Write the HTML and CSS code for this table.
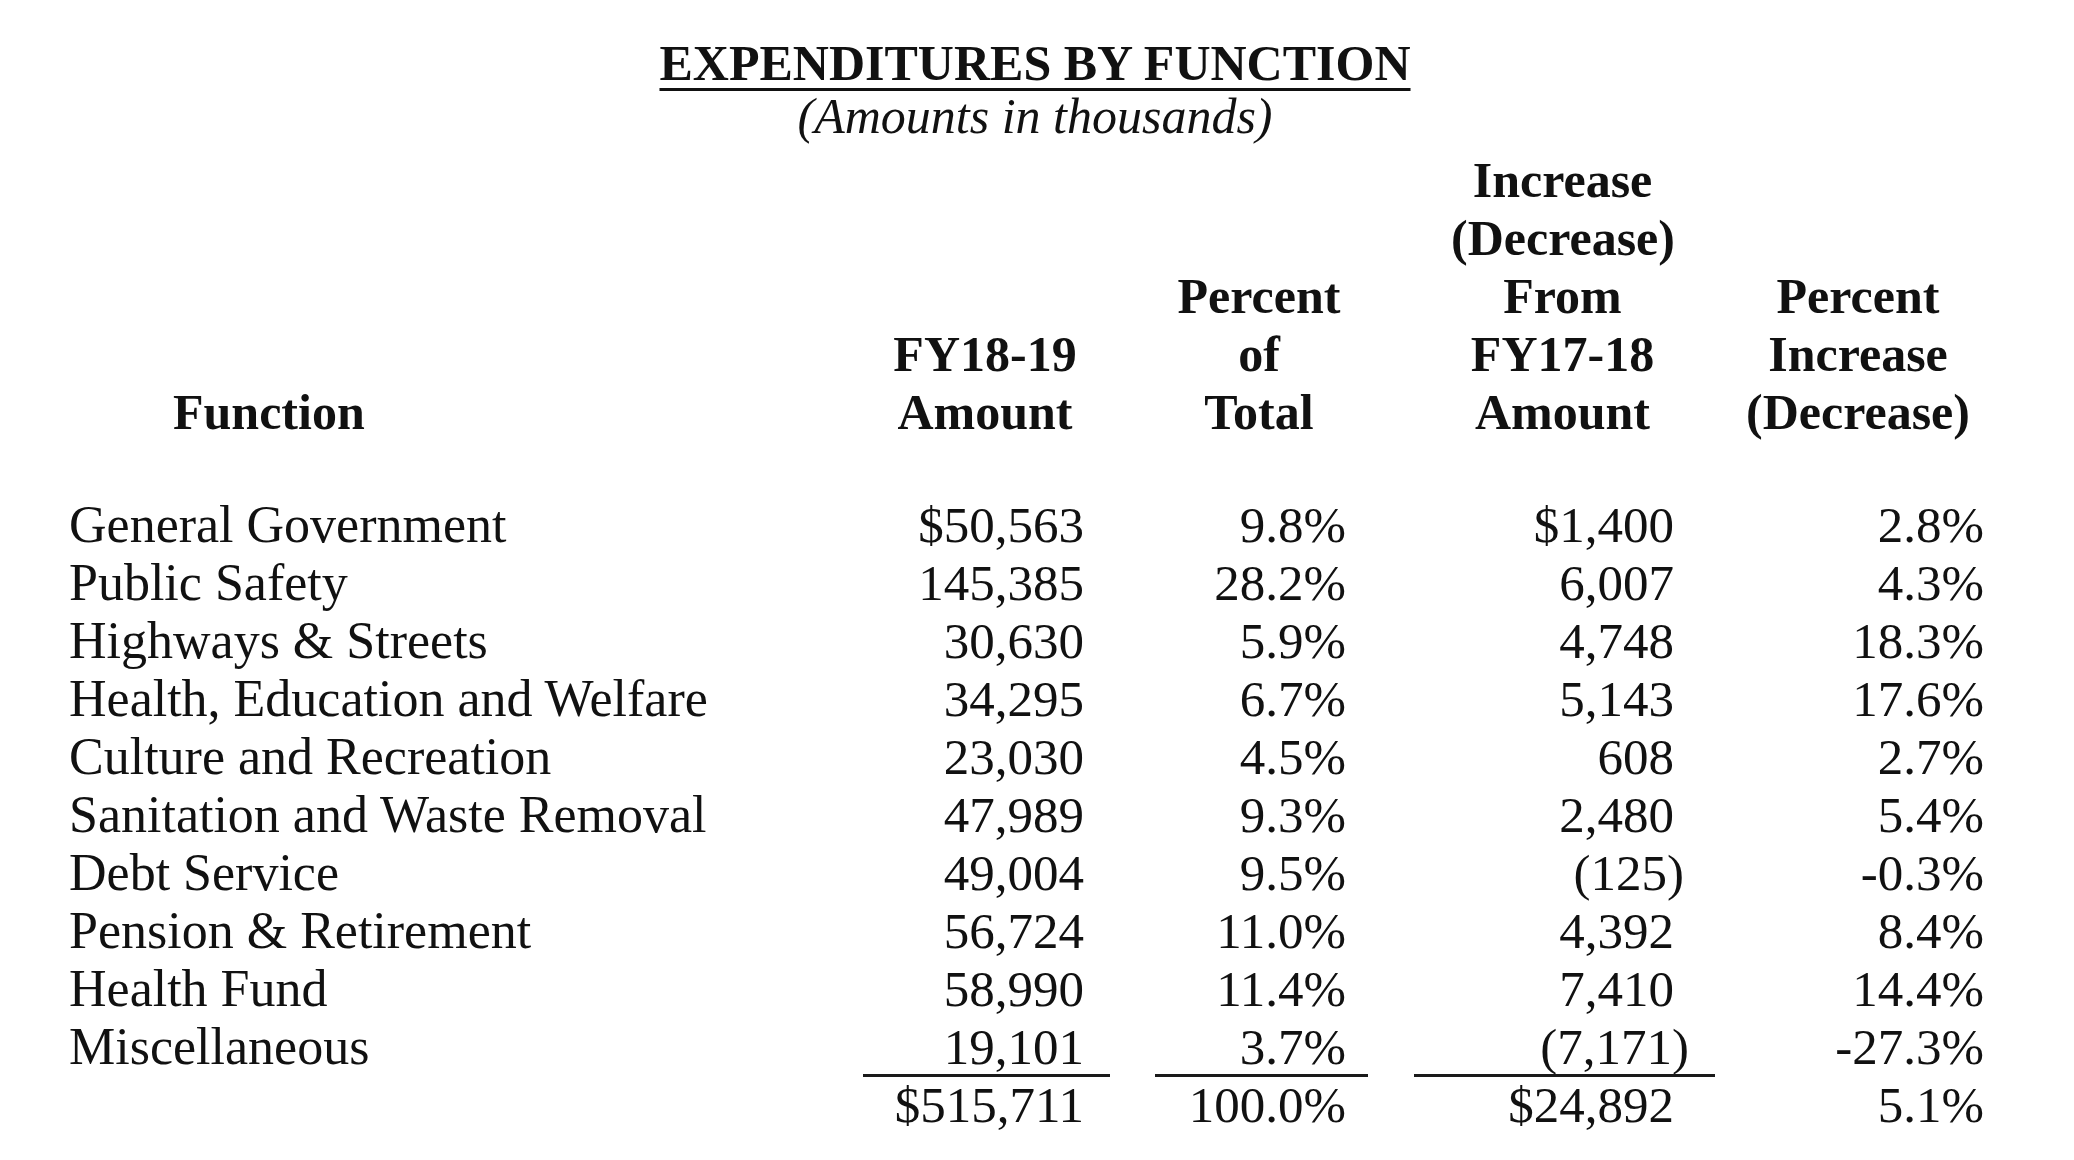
FILE: index.html
```html
<!DOCTYPE html>
<html lang="en">
<head>
<meta charset="utf-8">
<title>Expenditures by Function</title>
<link rel="stylesheet" href="styles.css">
</head>
<body>
<div class="page">
  <div class="heading">
    <div class="title">EXPENDITURES BY FUNCTION</div>
    <div class="subtitle">(Amounts in thousands)</div>
  </div>

  <div class="row head">
    <div class="label-head">Function</div>
    <div class="c1 hcell">FY18-19<br>Amount</div>
    <div class="c2 hcell">Percent<br>of<br>Total</div>
    <div class="c3 hcell">Increase<br>(Decrease)<br>From<br>FY17-18<br>Amount</div>
    <div class="c4 hcell">Percent<br>Increase<br>(Decrease)</div>
  </div>

  <div class="body">
    <div class="row first">
      <div class="label">General Government</div>
      <div class="c1 num">$50,563</div>
      <div class="c2 num">9.8%</div>
      <div class="c3 num">$1,400</div>
      <div class="c4 num">2.8%</div>
    </div>
    <div class="row">
      <div class="label">Public Safety</div>
      <div class="c1 num">145,385</div>
      <div class="c2 num">28.2%</div>
      <div class="c3 num">6,007</div>
      <div class="c4 num">4.3%</div>
    </div>
    <div class="row">
      <div class="label">Highways &amp; Streets</div>
      <div class="c1 num">30,630</div>
      <div class="c2 num">5.9%</div>
      <div class="c3 num">4,748</div>
      <div class="c4 num">18.3%</div>
    </div>
    <div class="row">
      <div class="label">Health, Education and Welfare</div>
      <div class="c1 num">34,295</div>
      <div class="c2 num">6.7%</div>
      <div class="c3 num">5,143</div>
      <div class="c4 num">17.6%</div>
    </div>
    <div class="row">
      <div class="label">Culture and Recreation</div>
      <div class="c1 num">23,030</div>
      <div class="c2 num">4.5%</div>
      <div class="c3 num">608</div>
      <div class="c4 num">2.7%</div>
    </div>
    <div class="row">
      <div class="label">Sanitation and Waste Removal</div>
      <div class="c1 num">47,989</div>
      <div class="c2 num">9.3%</div>
      <div class="c3 num">2,480</div>
      <div class="c4 num">5.4%</div>
    </div>
    <div class="row">
      <div class="label">Debt Service</div>
      <div class="c1 num">49,004</div>
      <div class="c2 num">9.5%</div>
      <div class="c3 num">(125<span class="paren">)</span></div>
      <div class="c4 num">-0.3%</div>
    </div>
    <div class="row">
      <div class="label">Pension &amp; Retirement</div>
      <div class="c1 num">56,724</div>
      <div class="c2 num">11.0%</div>
      <div class="c3 num">4,392</div>
      <div class="c4 num">8.4%</div>
    </div>
    <div class="row">
      <div class="label">Health Fund</div>
      <div class="c1 num">58,990</div>
      <div class="c2 num">11.4%</div>
      <div class="c3 num">7,410</div>
      <div class="c4 num">14.4%</div>
    </div>
    <div class="row">
      <div class="label">Miscellaneous</div>
      <div class="c1 num">19,101</div>
      <div class="c2 num">3.7%</div>
      <div class="c3 num">(7,171<span class="paren paren-wide">)</span></div>
      <div class="c4 num">-27.3%</div>
    </div>
    <div class="row rules">
      <div class="c1 rule rule1"></div>
      <div class="c2 rule rule2"></div>
      <div class="c3 rule rule3"></div>
    </div>
    <div class="row total">
      <div class="label"></div>
      <div class="c1 num">$515,711</div>
      <div class="c2 num">100.0%</div>
      <div class="c3 num">$24,892</div>
      <div class="c4 num">5.1%</div>
    </div>
  </div>
</div>
</body>
</html>
```

FILE: styles.css
```css
html, body {
  margin: 0;
  padding: 0;
  background: #ffffff;
}

body {
  width: 2074px;
  height: 1160px;
  overflow: hidden;
  color: #111111;
  font-family: "Liberation Serif", "Times New Roman", serif;
}

.page {
  padding-top: 37px;
}

.heading {
  width: 2070px;
  text-align: center;
}

.title {
  font-size: 50px;
  font-weight: bold;
  line-height: 53px;
  text-decoration: underline;
  text-decoration-thickness: 3px;
  text-underline-offset: 8px;
}

.subtitle {
  font-size: 50px;
  font-style: italic;
  line-height: 53px;
}

.row {
  display: grid;
  grid-template-columns: 886px 198px 88px 174px 105px 223px 58px 252px;
  height: 58px;
  font-size: 51px;
  line-height: 58px;
}

.c1 { grid-column: 2; }
.c2 { grid-column: 4; }
.c3 { grid-column: 6; }
.c4 { grid-column: 8; }

.head {
  height: auto;
  margin-top: 8px;
  align-items: end;
  font-size: 50px;
  font-weight: bold;
}

.label-head {
  grid-column: 1;
  padding-left: 173px;
}

.hcell {
  text-align: center;
  white-space: nowrap;
}

.body {
  margin-top: 55px;
}

.label {
  grid-column: 1;
  padding-left: 69px;
  font-size: 52px;
  white-space: nowrap;
}

.num {
  text-align: right;
  white-space: nowrap;
}

.paren {
  margin-right: -10px;
}

.paren-wide {
  margin-right: -15px;
}

.rules {
  height: 3px;
  margin-top: -2px;
  margin-bottom: -1px;
}

.rule {
  height: 0;
  border-top: 3px solid #1a1a1a;
}

.rule1 {
  margin-left: -23px;
  margin-right: -26px;
}

.rule2 {
  margin-left: -17px;
  margin-right: -22px;
}

.rule3 {
  margin-left: -37px;
  margin-right: -41px;
}
```
